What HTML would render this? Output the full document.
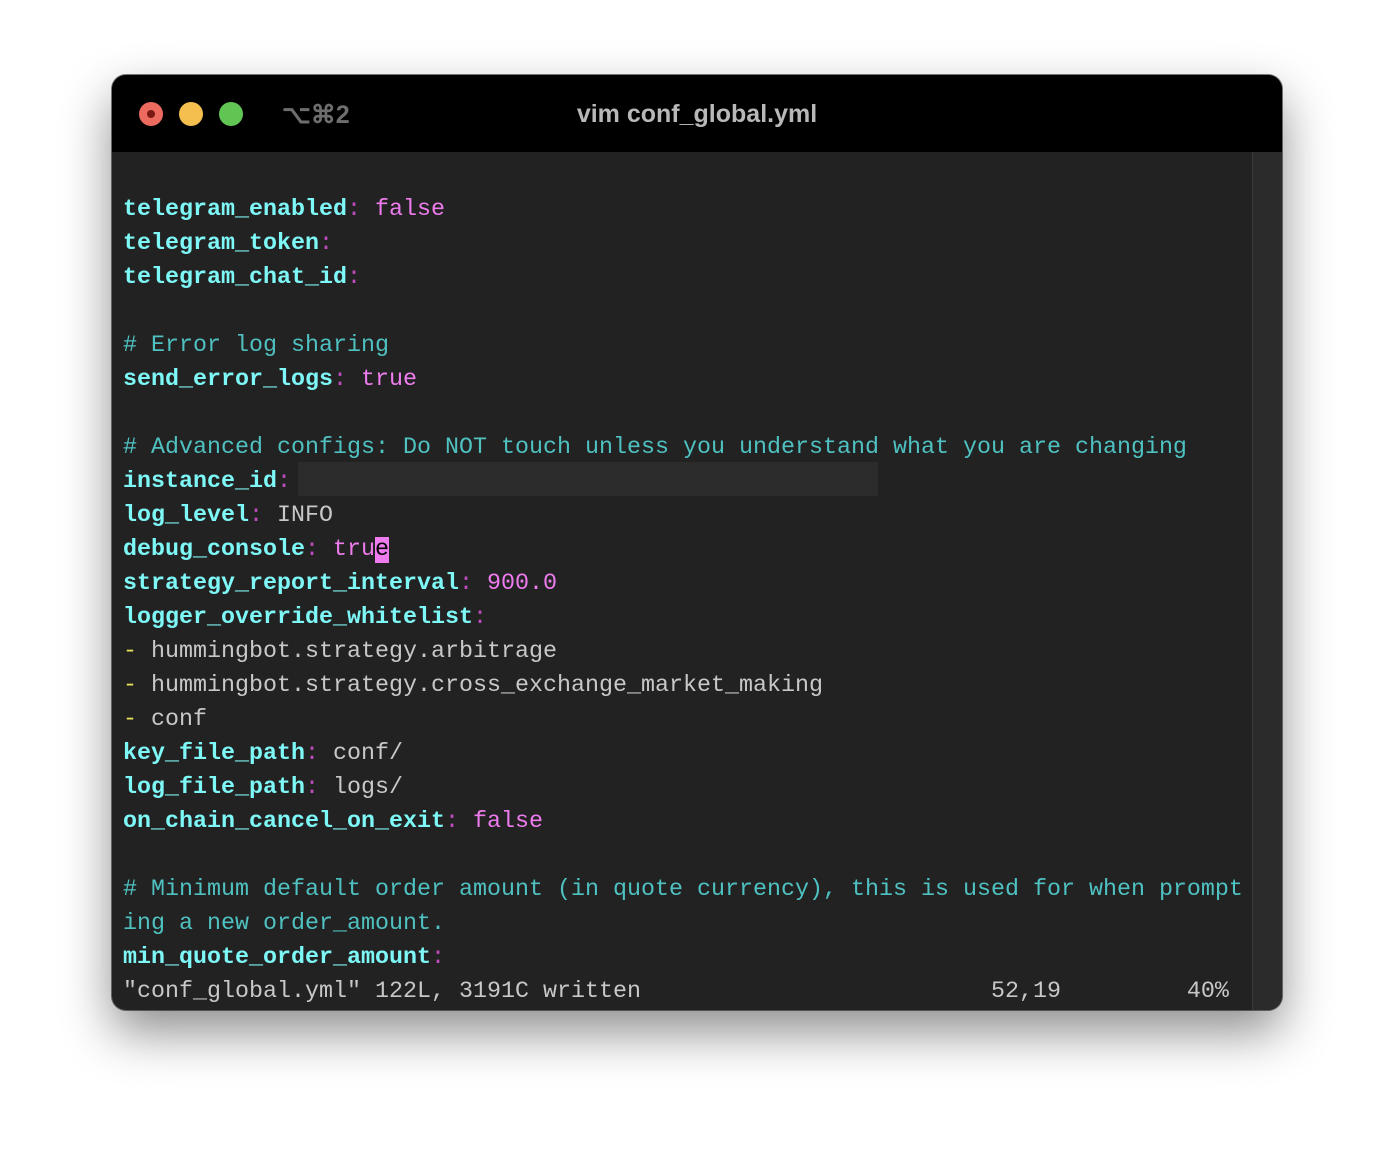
<!DOCTYPE html>
<html><head><meta charset="utf-8"><style>
html,body{margin:0;padding:0;background:#fff;width:1394px;height:1158px;overflow:hidden}
.win{position:absolute;left:112px;top:75px;width:1170px;height:935px;border-radius:14px;overflow:hidden;background:#222;box-shadow:0 22px 50px rgba(0,0,0,.45),0 0 0 1px rgba(0,0,0,.5)}
.tb{position:absolute;left:0;top:0;width:100%;height:77px;background:#000}
.dot{position:absolute;top:27px;width:24px;height:24px;border-radius:50%}
.sc{position:absolute;left:170px;top:25px;font:bold 25px "Liberation Sans",sans-serif;color:#6e6e6e}
.title{position:absolute;left:0;right:0;top:25px;text-align:center;font:bold 25px "Liberation Sans",sans-serif;color:#b8b8b8}
.sb{position:absolute;left:1140px;top:77px;width:30px;bottom:0;background:#2b2b2b;border-left:1px solid #3a3a3a}
.code{position:absolute;left:11px;top:118px;font:23.33px/34px "Liberation Mono",monospace;color:#c8c8c8;white-space:pre}
.k{color:#7ef7f7;font-weight:bold}.p{color:#c04cc0}.v{color:#ee7cee}.c{color:#4fc1c1}.y{color:#e8e05a}
.hl{position:absolute;left:186px;top:387px;width:580px;height:34px;background:#2c2c2c}
.cur{background:#ee7cee;color:#000}
</style></head><body>
<div class="win">
<div class="tb">
<div class="dot" style="left:27px;background:#ec6a5e"><div style="position:absolute;left:8px;top:8px;width:8px;height:8px;border-radius:50%;background:#7a1a12"></div></div>
<div class="dot" style="left:67px;background:#f4bf4f"></div>
<div class="dot" style="left:107px;background:#61c554"></div>
<div class="sc">⌥⌘2</div>
<div class="title">vim conf_global.yml</div>
</div>
<div class="hl"></div>
<div class="sb"></div>
<div class="code"><span class="k">telegram_enabled</span><span class="p">:</span> <span class="v">false</span>
<span class="k">telegram_token</span><span class="p">:</span>
<span class="k">telegram_chat_id</span><span class="p">:</span>

<span class="c"># Error log sharing</span>
<span class="k">send_error_logs</span><span class="p">:</span> <span class="v">true</span>

<span class="c"># Advanced configs: Do NOT touch unless you understand what you are changing</span>
<span class="k">instance_id</span><span class="p">:</span>
<span class="k">log_level</span><span class="p">:</span> INFO
<span class="k">debug_console</span><span class="p">:</span> <span class="v">tru</span><span class="cur">e</span>
<span class="k">strategy_report_interval</span><span class="p">:</span> <span class="v">900.0</span>
<span class="k">logger_override_whitelist</span><span class="p">:</span>
<span class="y">-</span> hummingbot.strategy.arbitrage
<span class="y">-</span> hummingbot.strategy.cross_exchange_market_making
<span class="y">-</span> conf
<span class="k">key_file_path</span><span class="p">:</span> conf/
<span class="k">log_file_path</span><span class="p">:</span> logs/
<span class="k">on_chain_cancel_on_exit</span><span class="p">:</span> <span class="v">false</span>

<span class="c"># Minimum default order amount (in quote currency), this is used for when prompt</span>
<span class="c">ing a new order_amount.</span>
<span class="k">min_quote_order_amount</span><span class="p">:</span>
"conf_global.yml" 122L, 3191C written                         52,19         40%</div>
</div>
</body></html>
